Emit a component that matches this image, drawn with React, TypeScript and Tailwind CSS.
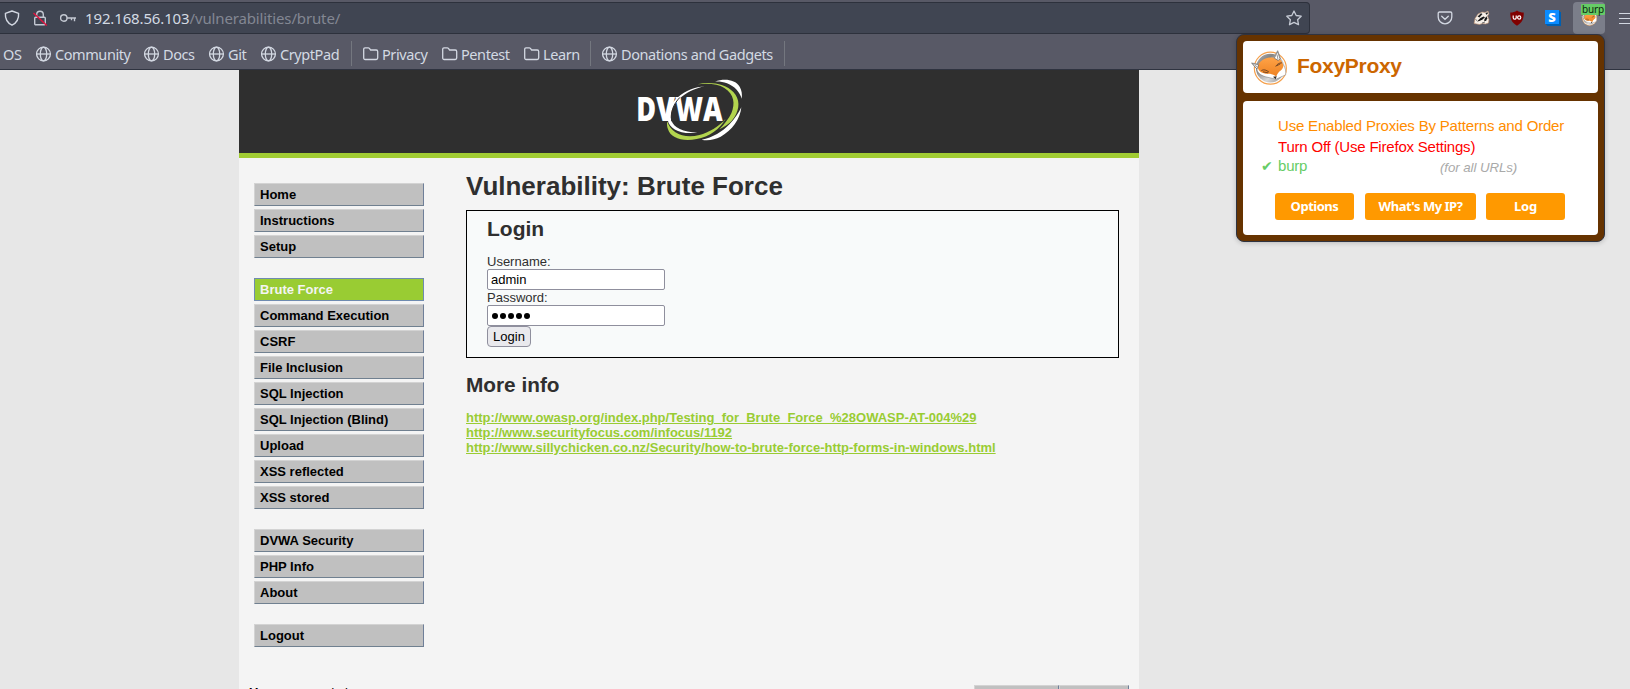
import React from "react";

const Globe = () => (
  <svg className="h-4 w-4 shrink-0" viewBox="0 0 16 16" fill="none" stroke="#d3d8e2" strokeWidth="1.3">
    <circle cx="7.500" cy="8" r="6.9" />
    <ellipse cx="7.500" cy="8" rx="3.2" ry="6.9" />
    <path d="M.8 8h13.4" />
  </svg>
);

const Folder = () => (
  <svg className="h-4 w-4 shrink-0" viewBox="0 0 16 16" fill="none" stroke="#d3d8e2" strokeWidth="1.3">
    <path d="M.7 3.2c0-.8.5-1.4 1.3-1.4h3.2c.5 0 .9.2 1.2.6L7.600 4h5.6c.9 0 1.5.6 1.5 1.4v6.7c0 .8-.6 1.4-1.5 1.4h-11C1.300 13.500.7 12.900.7 12.100z" />
  </svg>
);

const Fox = ({ className }: { className: string }) => (
  <svg className={className} viewBox="0 0 108 104">
    <defs>
      <linearGradient id="foxDisc" x1="0" y1="0" x2="1" y2="1">
        <stop offset="0" stopColor="#b5b5b5" />
        <stop offset=".3" stopColor="#858585" />
        <stop offset=".65" stopColor="#d8d8d8" />
        <stop offset="1" stopColor="#888" />
      </linearGradient>
      <linearGradient id="foxFur" x1="0" y1="0" x2="0" y2="1">
        <stop offset="0" stopColor="#ffa347" />
        <stop offset="1" stopColor="#ee8222" />
      </linearGradient>
    </defs>
    <circle cx="58" cy="54" r="48" fill="#fff" stroke="#f5a04c" strokeWidth="3.5" />
    <circle cx="58" cy="54" r="43" fill="url(#foxDisc)" />
    <path d="M1 38l24 5C33 31 50 22 68 23L80 1l8 22c-1 7 4 14 9 21 7 10 8 20 7 30L75 87 44 80C27 75 20 68 17 56z" fill="#fff" stroke="#777" strokeWidth="1.5" strokeLinejoin="round" />
    <path d="M21 43c12-16 29-24 48-20 13-1 20 4 25 14 4 9 4 14-1 20-6 6-13 9-17 22-8-6-15-8-26-8-17-1-33-9-29-28z" fill="url(#foxFur)" />
    <path d="M70 24L80 4l7 22-5 5zM4 40l19 4-5 13z" fill="#fff" stroke="#555" strokeWidth="2" />
    <path d="M78 13l3 15M12 44l7 7" stroke="#999" strokeWidth="3" />
    <path d="M31 61c7-4 15-2 23 5M74 49c4-7 10-11 19-11M36 65l15 3M77 47l11-6" fill="none" stroke="#7a4a24" strokeWidth="3" />
    <path d="M66 80l11-2-3 9z" fill="#3a3028" />
  </svg>
);

const DvwaLogo = () => (
  <svg className="h-[84px] w-[180px]" viewBox="0 12 540 252">
    <path d="M345 47C372 37 405 40 419 62c6 10 8 22 6 36-5-19-22-38-44-46-12-4-24-6-36-5z" fill="#fff" />
    <path d="M424 124c-3 34-28 70-62 88-18 9-38 13-57 9 33-6 62-24 84-47 15-15 27-33 35-50z" fill="#fff" />
    <path d="M293 55c34-10 84-3 107 23 20 21 20 49 3 76-9 15-28 29-45 36 15-15 29-32 36-48 12-30 9-56-21-76-18-11-46-15-80-11z" fill="#b2d44e" />
    <path d="M202 166c9 35 52 54 96 41 29-8 58-25 79-49-17 32-50 54-87 61-43 9-79-4-86-29-3-8-4-16-2-24z" fill="#b2d44e" />
    <text x="109" y="166" textLength="259" lengthAdjust="spacingAndGlyphs" fill="#fff" stroke="#2f2f2f" strokeWidth="5" paintOrder="stroke" fontFamily="Open Sans, Noto Sans, sans-serif" fontWeight="800" fontSize="99">DVWA</text>
    <path d="M315 61c-30 6-59 20-77 38-21 20-29 44-24 63 6 24 36 36 78 38-51 6-84-11-89-39-5-52 52-96 112-100z" fill="#fff" />
    <path d="M240 94c-20 20-29 44-25 72" fill="none" stroke="#2f2f2f" strokeWidth="3" />
  </svg>
);

const Mark = ({ kind, label, box }: { kind: "globe" | "folder"; label: string; box: string }) => (
  <div className={`flex shrink-0 items-center gap-[3px] ${box}`}>
    {kind === "globe" ? <Globe /> : <Folder />}
    <span className="whitespace-nowrap">{label}</span>
  </div>
);

const groups = [
  ["Home", "Instructions", "Setup"],
  ["Brute Force", "Command Execution", "CSRF", "File Inclusion", "SQL Injection", "SQL Injection (Blind)", "Upload", "XSS reflected", "XSS stored"],
  ["DVWA Security", "PHP Info", "About"],
  ["Logout"],
];

function Toolbar() {
  return (
    <div className="flex h-[70px] flex-col border-b border-[#2f3340] bg-[#585966] font-['Noto_Sans',sans-serif]">
      <div className="flex h-[34px] shrink-0 pt-[2px]">
        <div className="flex h-8 w-[1310px] shrink-0 items-center rounded-r-[4px] border border-l-0 border-[#2d313c] bg-[#404552] pl-1">
          <svg className="h-4 w-4 shrink-0" viewBox="0 0 16 16" fill="none" stroke="#d3d8e2" strokeWidth="1.4" strokeLinejoin="round">
            <path d="M8 1l6.600 2.300C15 9 12.500 13 8 15.200 3.500 13 1 9 1.400 3.300z" />
          </svg>
          <svg className="ml-3 h-4 w-4 shrink-0" viewBox="0 0 16 16" fill="none" stroke="#c3c8d2" strokeWidth="1.4">
            <rect x="2.700" y="7.300" width="10.600" height="7.400" rx="1" />
            <path d="M4.700 7V4.500a3.300 3.300 0 0 1 6.600 0V7" />
            <path d="M1.500 3l13.300 12.500" stroke="#e0143f" strokeWidth="1.500" />
          </svg>
          <svg className="ml-3 h-4 w-4 shrink-0" viewBox="0 0 16 16" fill="none" stroke="#c3c8d2" strokeWidth="1.400">
            <circle cx="3.800" cy="8" r="3.200" />
            <path d="M7 8h9M14.500 8v3.200M11.500 8v2.300" />
          </svg>
          <div className="ml-[9px] whitespace-nowrap text-[15px] leading-5 tracking-[-0.14px] text-[#d3dae3]">
            192.168.56.103<span className="text-[#838793]">/vulnerabilities/brute/</span>
          </div>
          <svg className="ml-auto mr-[7px] h-4 w-4 shrink-0" viewBox="0 0 16 16" fill="none" stroke="#c6cbd5" strokeWidth="1.300" strokeLinejoin="round">
            <path d="M8 1l2.200 4.500 5 .7-3.600 3.500.9 5L8 12.400l-4.500 2.300.9-5L.8 6.200l5-.7z" />
          </svg>
        </div>
        <div className="flex h-8 flex-1 items-center pl-[127px]">
          <svg className="h-4 w-4 shrink-0" viewBox="0 0 16 16" fill="none" stroke="#d3d8e2" strokeWidth="1.300">
            <path d="M2.500 2h11c.8 0 1.300.5 1.300 1.300V7A6.800 6.800 0 0 1 1.200 7V3.300C1.200 2.500 1.700 2 2.500 2z" />
            <path d="M4.700 6.200L8 9.300l3.300-3.100" strokeLinecap="round" />
          </svg>
          <svg className="ml-5 h-4 w-[18px] shrink-0" viewBox="0 0 18 16">
            <path d="M1 13.500l1-5L5 4l4-2 3 .5 3-1.500 1 3-1.500 2 1.500 3.500-.5 3.500-3 1-3-.5-3 1z" fill="#f6efe8" stroke="#b98a68" strokeWidth=".6" strokeLinejoin="round" />
            <path d="M4.500 6.500L8 3.300l1.500.7-3 3.500zM12.500 3.300l2-1.300.3 1.700-1.500 1z" fill="#222" />
            <path d="M4 11.500L7.500 8l3-1.500 1.500.7-2.500 2.300-3 1.500z" fill="#161616" />
            <path d="M11.500 9l2-2.700.7 2-1 2.500-2 .5z" fill="#161616" />
            <path d="M2.500 9.500l1.500 1M9 13l3-1" stroke="#555" strokeWidth=".8" />
          </svg>
          <svg className="ml-[18px] h-4 w-4 shrink-0" viewBox="0 0 16 16">
            <path d="M8 .4c2 1.400 4.200 2 6.700 2.200C15 9 13 13 8 15.800 3 13 1 9 1.300 2.600 3.800 2.400 6 1.800 8 .4z" fill="#800000" />
            <path d="M4.200 5.500v2.200a1.500 1.500 0 0 0 3 0V5.500" fill="none" stroke="#fff" strokeWidth="1.200" />
            <circle cx="10.200" cy="7.500" r="1.600" fill="none" stroke="#fff" strokeWidth="1.200" />
          </svg>
          <div className="mb-[2px] ml-[20px] flex h-[14px] w-[14px] shrink-0 items-center justify-center bg-[#0a8cff] font-['Noto_Sans'] text-[13px] font-black leading-none text-white shadow-[1px_1px_#005fb0,2px_2px_#005fb0]">S</div>
          <div className="relative ml-[14px] flex h-8 w-8 shrink-0 items-center justify-center rounded-[4px] bg-[#7b7e8a]">
            <Fox className="h-4 w-4" />
            <span className="absolute right-0 top-[2px] h-[11px] w-6 rounded-[1px] bg-[#66cc66] text-center text-[10px] leading-[11px] tracking-[-0.1px] text-[#0c260c]">burp</span>
          </div>
          <svg className="ml-[13px] h-4 w-4 shrink-0" viewBox="0 0 16 16" stroke="#d3d8e2" strokeWidth="1.200">
            <path d="M1 3.500h14M1 8.500h14M1 13.500h14" />
          </svg>
        </div>
      </div>
      <div className="flex h-[35px] items-center pt-1 text-[14.5px] leading-5 tracking-[-0.42px] text-[#d3dae3]">
        <span className="w-9 shrink-0 pl-[3px]">OS</span>
        <Mark kind="globe" label="Community" box="w-[108px]" />
        <Mark kind="globe" label="Docs" box="w-[65px]" />
        <Mark kind="globe" label="Git" box="w-[52px]" />
        <Mark kind="globe" label="CryptPad" box="w-[90px]" />
        <div className="h-[25px] w-px shrink-0 bg-[#74777f]" />
        <Mark kind="folder" label="Privacy" box="ml-[11px] w-[79px]" />
        <Mark kind="folder" label="Pentest" box="w-[82px]" />
        <Mark kind="folder" label="Learn" box="w-[66px]" />
        <div className="h-[25px] w-px shrink-0 bg-[#74777f]" />
        <Mark kind="globe" label="Donations and Gadgets" box="ml-[11px] w-[182px]" />
        <div className="h-[25px] w-px shrink-0 bg-[#74777f]" />
      </div>
    </div>
  );
}

function FoxyPopup() {
  return (
    <div className="absolute left-[1236px] top-[34px] flex h-[208px] w-[369px] flex-col gap-2 rounded-[8px] border border-[#2f3340] bg-[#663300] p-[6px] font-['Liberation_Sans',sans-serif] shadow-[0_1px_5px_rgba(0,0,0,0.2)]">
      <div className="flex h-[52px] shrink-0 items-center rounded-[4px] bg-white pl-2">
        <Fox className="h-[35px] w-9" />
        <span className="ml-[10px] pb-[2px] text-[21px] font-bold leading-6 tracking-[-0.3px] text-[#cc6600]">FoxyProxy</span>
      </div>
      <div className="flex flex-1 flex-col rounded-[4px] bg-white pt-[14px]">
        <div className="pl-[35px] text-[15px] leading-[21px] tracking-[-0.18px] text-[#ff8c00]">Use Enabled Proxies By Patterns and Order</div>
        <div className="pl-[35px] text-[15px] leading-[21px] tracking-[-0.2px] text-[#ff0000]">Turn Off (Use Firefox Settings)</div>
        <div className="flex h-[18px] items-center text-[15px] leading-[18px] text-[#66cc66]">
          <span className="w-[35px] pl-[18px] font-['DejaVu_Sans'] text-[14px]">✔</span>
          <span className="w-[162px] tracking-[-0.2px]">burp</span>
          <span className="pt-[3px] text-[13.300px] italic tracking-[-0.08px] text-[#a9a9a9]">(for all URLs)</span>
        </div>
        <div className="mt-[18px] flex pl-8 font-['Noto_Sans',sans-serif] text-[13px] font-bold leading-[27px] tracking-[-0.48px] text-white">
          <div className="h-[27px] w-[79px] rounded-[3px] bg-[#ff9900] text-center">Options</div>
          <div className="ml-[11px] h-[27px] w-[111px] rounded-[3px] bg-[#ff9900] text-center">What's My IP?</div>
          <div className="ml-[10px] h-[27px] w-[79px] rounded-[3px] bg-[#ff9900] text-center tracking-[-0.2px]">Log</div>
        </div>
      </div>
    </div>
  );
}

export default function App() {
  return (
    <div className="relative flex h-[689px] w-[1630px] flex-col overflow-hidden bg-[#e7e7e7] font-['Liberation_Sans',sans-serif] text-[13px] leading-[15px]">
      <Toolbar />
      <div className="ml-[239px] flex h-[619px] w-[900px] flex-col overflow-hidden bg-[#f4f4f4]">
        <div className="flex h-[88px] shrink-0 border-b-[5px] border-[#a1cc33] bg-[#2f2f2f] pl-[361px]">
          <DvwaLogo />
        </div>
        <div className="flex h-[527px] shrink-0">
          <div className="flex w-[185px] shrink-0 flex-col gap-5 pl-[15px] pt-[25px] font-bold text-black">
            {groups.map((group) => (
              <div key={group[0]} className="flex flex-col gap-[3px]">
                {group.map((item) => (
                  <div
                    key={item}
                    className={
                      item === "Brute Force"
                        ? "h-[23px] border border-[#6f8bb0] bg-[#99cc33] pl-[5px] leading-[21px] text-[#f4f4f4]"
                        : "h-[23px] border border-b-[#708090] border-l-[#d3d3d3] border-r-[#6f7f99] border-t-[#d3d3d3] bg-[#c0c0c0] pl-[5px] leading-[21px]"
                    }
                  >
                    {item}
                  </div>
                ))}
              </div>
            ))}
          </div>
          <div className="ml-[42px] w-[653px] pt-[13px] text-[#2f2f2f]">
            <h1 className="text-[26px] font-bold leading-[30px]">Vulnerability: Brute Force</h1>
            <div className="mt-[9px] flex h-[148px] flex-col items-start border border-black bg-[#f8fafa] pl-5 pt-[6px]">
              <h2 className="text-[21px] font-bold leading-6">Login</h2>
              <div className="mt-[13px]">Username:</div>
              <div className="h-[21px] w-[178px] rounded-[2px] border border-[#8f8f9d] bg-white pl-[3px] leading-[19px] text-black">admin</div>
              <div>Password:</div>
              <div className="flex h-[21px] w-[178px] items-center gap-[2px] rounded-[2px] border border-[#8f8f9d] bg-white pl-[4px] pt-px">
                {[0, 1, 2, 3, 4].map((n) => (
                  <span key={n} className="h-[6px] w-[6px] rounded-full bg-black" />
                ))}
              </div>
              <div className="h-[21px] w-11 rounded-[4px] border border-[#8f8f9d] bg-[#e9e9ed] text-center leading-[19px] text-black">Login</div>
            </div>
            <h2 className="mt-[15px] text-[20.800px] font-bold leading-6">More info</h2>
            <div className="mt-[13px] flex flex-col items-start font-bold text-[#99cc33] underline">
              <span>http://www.owasp.org/index.php/Testing_for_Brute_Force_%28OWASP-AT-004%29</span>
              <span>http://www.securityfocus.com/infocus/1192</span>
              <span>http://www.sillychicken.co.nz/Security/how-to-brute-force-http-forms-in-windows.html</span>
            </div>
          </div>
        </div>
        <div className="flex h-[15px] shrink-0 justify-between pl-[10px] pr-[10px] text-black">
          <span><b>Username:</b> admin</span>
          <div className="flex">
            <div className="h-6 w-[85px] border border-l-[#d3d3d3] border-r-[#6f7f99] border-t-[#d3d3d3] bg-[#c0c0c0]" />
            <div className="h-6 w-[70px] border border-l-[#d3d3d3] border-r-[#6f7f99] border-t-[#d3d3d3] bg-[#c0c0c0]" />
          </div>
        </div>
      </div>
      <FoxyPopup />
    </div>
  );
}
